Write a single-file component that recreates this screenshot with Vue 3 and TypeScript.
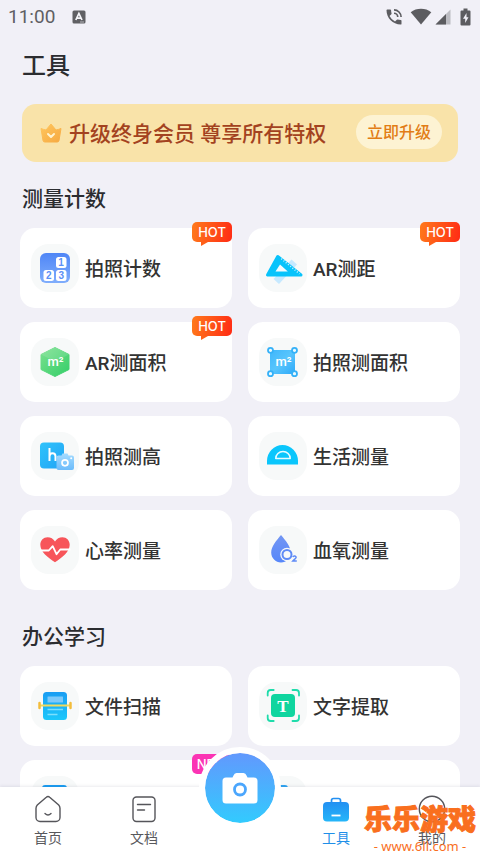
<script setup lang="ts">
interface Tool {
  id: string
  icon: string
  label?: string
  tag?: 'HOT' | 'NEW'
}

interface Section {
  title: string
  tools: Tool[]
}

const sections: Section[] = [
  {
    title: '测量计数',
    tools: [
      { id: 'count', icon: 'count', label: '拍照计数', tag: 'HOT' },
      { id: 'distance', icon: 'distance', label: 'AR测距', tag: 'HOT' },
      { id: 'ar-area', icon: 'hexagon', label: 'AR测面积', tag: 'HOT' },
      { id: 'photo-area', icon: 'area', label: '拍照测面积' },
      { id: 'height', icon: 'height', label: '拍照测高' },
      { id: 'life', icon: 'protractor', label: '生活测量' },
      { id: 'heart', icon: 'heart', label: '心率测量' },
      { id: 'oxygen', icon: 'oxygen', label: '血氧测量' },
    ],
  },
  {
    title: '办公学习',
    tools: [
      { id: 'scan', icon: 'scan', label: '文件扫描' },
      { id: 'text', icon: 'text', label: '文字提取' },
      { id: 'sheet', icon: 'sheet', tag: 'NEW' },
      { id: 'card', icon: 'card' },
    ],
  },
]
</script>

<template>
  <div class="app">
    <header class="status">
      <span class="clock">11:00</span>
      <svg class="badge-a" viewBox="0 0 14 14" width="14" height="14">
        <rect x="0.5" y="0.5" width="13" height="13" rx="1.5" fill="#606064" />
        <path d="M3.8 10 6.9 3.4 10 10M5 8.2h3.8" fill="none" stroke="#f6f6fa" stroke-width="1.7" />
        <path d="M8 12h4" stroke="#b5b5ba" stroke-width="1" />
      </svg>
      <span class="status-icons">
        <svg viewBox="0 0 24 24" width="20" height="20" fill="#5c5c60">
          <path d="M20 15.5c-1.25 0-2.45-.2-3.57-.57a1 1 0 0 0-1.02.24l-2.2 2.2a15.05 15.05 0 0 1-6.59-6.58l2.2-2.21a.96.96 0 0 0 .25-1A11.36 11.36 0 0 1 8.5 4a1 1 0 0 0-1-1H4a1 1 0 0 0-1 1c0 9.39 7.61 17 17 17a1 1 0 0 0 1-1v-3.500a1 1 0 0 0-1-1z" />
          <path d="M12 3.500a8.500 8.500 0 0 1 8.500 8.500M12 7.500a4.500 4.500 0 0 1 4.500 4.500" fill="none" stroke="#5c5c60" stroke-width="2" />
        </svg>
        <svg class="wifi" viewBox="0 0 22 17" width="22" height="17" fill="#5c5c60">
          <path d="M11 16.500.7 4.200C6.500-.4 15.500-.4 21.300 4.200z" />
        </svg>
        <svg class="signal" viewBox="0 0 16 16" width="16" height="16">
          <path d="M15.500.5v15H.5z" fill="#bcbcc2" />
          <path d="M11 5v10.500H.5z" fill="#5c5c60" />
        </svg>
        <svg class="battery" viewBox="0 0 11 18" width="11" height="18">
          <path d="M3.500.5h4v2H9.500a1 1 0 0 1 1 1v13a1 1 0 0 1-1 1h-8a1 1 0 0 1-1-1v-13a1 1 0 0 1 1-1h2z" fill="#5c5c60" />
          <path d="M6.500 5 3 10.700h2.200V15l3.300-5.700H6.500z" fill="#f1f0f7" />
        </svg>
      </span>
    </header>

    <main>
      <h1>工具</h1>

      <div class="banner">
        <svg class="crown" viewBox="0 0 24 22" width="24" height="22">
          <defs>
            <linearGradient id="crown" x1="0" y1="0" x2="1" y2="1">
              <stop offset="0" stop-color="#ffc65e" />
              <stop offset="1" stop-color="#f6a941" />
            </linearGradient>
          </defs>
          <path d="M2 6.500Q4.500 7.500 7 8L12 2l5 6q2.500-.5 5-1.500L20 18.500q-.3 1.500-1.800 1.500H5.800Q4.300 20 4 18.500z" fill="url(#crown)" stroke="url(#crown)" stroke-linejoin="round" />
          <path d="m9 12 3 3 3-3" fill="none" stroke="#fff3cf" stroke-width="2" stroke-linecap="round" stroke-linejoin="round" />
        </svg>
        <span class="banner-text">升级终身会员 尊享所有特权</span>
        <button type="button" class="upgrade">立即升级</button>
      </div>

      <section v-for="section in sections" :key="section.title">
        <h2>{{ section.title }}</h2>
        <div class="grid">
          <button v-for="tool in section.tools" :key="tool.id" type="button" class="tool">
            <svg class="tile" viewBox="0 0 48 48" width="48" height="48">
              <template v-if="tool.icon === 'count'">
                <defs>
                  <linearGradient id="count" x1="0" y1="0" x2="0" y2="1">
                    <stop offset="0" stop-color="#4f86f6" />
                    <stop offset="1" stop-color="#7fadfc" />
                  </linearGradient>
                </defs>
                <rect x="9" y="9" width="30" height="30" rx="6" fill="url(#count)" />
                <g fill="#fff">
                  <rect x="25" y="13" width="10.500" height="11" rx="2.500" />
                  <rect x="12.500" y="26" width="10.500" height="11" rx="2.500" />
                  <rect x="25" y="26" width="10.500" height="11" rx="2.500" />
                </g>
                <g class="digit" fill="#5b8ff6">
                  <text x="30" y="22">1</text>
                  <text x="17.700" y="35">2</text>
                  <text x="30.300" y="35">3</text>
                </g>
              </template>

              <template v-else-if="tool.icon === 'distance'">
                <path d="m14.500 35 18-19.500 5.500 5-18 19.500z" fill="#c6e9ff" />
                <path d="M18.700 12.500 8.500 31h33.500z" fill="#08c3fb" stroke="#08c3fb" stroke-width="3" stroke-linejoin="round" />
                <path d="m21 20.500-4.500 7h12.300z" fill="#f3fbfe" />
                <path d="M22.300 14.700 40.500 29.800" fill="none" stroke="#c9f1ff" stroke-width="1.600" stroke-dasharray="1 1.900" />
              </template>

              <template v-else-if="tool.icon === 'hexagon'">
                <defs>
                  <linearGradient id="hex" x1="0" y1="0" x2="1" y2="1">
                    <stop offset="0" stop-color="#7be08f" />
                    <stop offset="1" stop-color="#35cf69" />
                  </linearGradient>
                </defs>
                <path d="M24 9.500 38 16.500v15L24 38.500 10 31.500v-15z" fill="url(#hex)" stroke="url(#hex)" stroke-linejoin="round" />
                <path d="m10 16.500 14 7 14-7L24 9.500z" fill="#fff" opacity=".12" />
                <text class="unit" x="24.500" y="28">m²</text>
              </template>

              <template v-else-if="tool.icon === 'area'">
                <defs>
                  <linearGradient id="area" x1="0" y1="0" x2="1" y2="1">
                    <stop offset="0" stop-color="#3fb6fb" />
                    <stop offset=".5" stop-color="#57c5fd" />
                    <stop offset="1" stop-color="#2fa9f8" />
                  </linearGradient>
                </defs>
                <rect x="11" y="12" width="25" height="24" fill="url(#area)" />
                <g fill="#eafaff" stroke="#35b1f8" stroke-width="1.800">
                  <circle cx="11.500" cy="12.300" r="2.500" />
                  <circle cx="35.500" cy="12.300" r="2.500" />
                  <circle cx="11.500" cy="35.700" r="2.500" />
                  <circle cx="35.500" cy="35.700" r="2.500" />
                </g>
                <text class="unit" x="24.500" y="28">m²</text>
              </template>

              <template v-else-if="tool.icon === 'height'">
                <defs>
                  <linearGradient id="height" x1="0" y1="0" x2="1" y2="1">
                    <stop offset="0" stop-color="#2fc3fb" />
                    <stop offset="1" stop-color="#22a4f5" />
                  </linearGradient>
                  <linearGradient id="height-cam" x1="0" y1="0" x2="0" y2="1">
                    <stop offset="0" stop-color="#a5dbff" />
                    <stop offset="1" stop-color="#6cbcfb" />
                  </linearGradient>
                </defs>
                <rect x="9" y="10.500" width="24" height="26" rx="4" fill="url(#height)" />
                <path d="M18.500 16v13M18.500 24.500c0-4.500 6-4.500 6 0v4.500" fill="none" stroke="#fff" stroke-width="2" />
                <path d="M30.500 23.500l1-2h5l1 2H41a2 2 0 0 1 2 2v10.500a2 2 0 0 1-2 2H27.500a2 2 0 0 1-2-2V25.500a2 2 0 0 1 2-2z" fill="url(#height-cam)" />
                <circle cx="34" cy="30.800" r="3" fill="none" stroke="#fff" stroke-width="1.700" />
                <circle cx="40.200" cy="26.200" r="1" fill="#fff" />
              </template>

              <template v-else-if="tool.icon === 'protractor'">
                <path d="M8 32.500V29a15.500 16 0 0 1 31 0v3.500z" fill="#0ac6fc" />
                <path d="M16.800 26.500a7.200 7 0 0 1 14.400 0z" fill="none" stroke="#e8fbff" stroke-width="1.600" stroke-linejoin="round" />
              </template>

              <template v-else-if="tool.icon === 'heart'">
                <path d="M24 36.300C17 31.500 9.300 26 9.300 18.800c0-4.500 3.300-7.500 7.200-7.500 3.200 0 5.800 1.500 7.500 4.200 1.700-2.700 4.300-4.200 7.500-4.200 3.900 0 7.200 3 7.200 7.500 0 7.200-7.700 12.700-14.700 17.500z" fill="#f7555a" />
                <path d="M8.500 24.500h9.300l3.900-4.300 3.800 8 3.800-4.700H39.500" fill="none" stroke="#fff" stroke-width="1.800" stroke-linejoin="round" />
              </template>

              <template v-else-if="tool.icon === 'oxygen'">
                <defs>
                  <linearGradient id="drop" x1="0" y1="0" x2="0" y2="1">
                    <stop offset="0" stop-color="#7396f3" />
                    <stop offset="1" stop-color="#5687fa" />
                  </linearGradient>
                </defs>
                <path d="M22 9c4.500 5.500 9.800 11.500 9.800 17.500 0 5.600-4.400 10-9.800 10s-9.800-4.400-9.800-10C12.200 20.500 17.500 14.500 22 9z" fill="url(#drop)" />
                <circle cx="28" cy="28.500" r="6.800" fill="#f7f9f9" />
                <circle cx="28" cy="28.500" r="4.500" fill="none" stroke="#5f8bf6" stroke-width="2" />
                <path d="M33.800 31c.5-1.500 3.500-1.300 3.300.5-.1 1-2 2-3.300 3.500h4" fill="none" stroke="#5f8bf6" stroke-width="1.500" />
              </template>

              <template v-else-if="tool.icon === 'scan'">
                <defs>
                  <linearGradient id="scan" x1="0" y1="0" x2="0" y2="1">
                    <stop offset="0" stop-color="#1a9df3" />
                    <stop offset="1" stop-color="#1cc8fb" />
                  </linearGradient>
                </defs>
                <rect x="12" y="10" width="24" height="28" rx="3.500" fill="url(#scan)" />
                <rect x="16.500" y="14.500" width="15.500" height="6" rx=".5" fill="#7dc9fa" />
                <path d="M16.500 27.500h15.500M16.500 32.500h10" stroke="#7be0fd" stroke-width="1.500" />
                <path d="M9 23.500h30" stroke="#f2d95c" stroke-width="2" />
                <path d="M8.500 21v5M39.500 21v5" stroke="#f3bd3c" stroke-width="2.500" stroke-linecap="round" />
              </template>

              <template v-else-if="tool.icon === 'text'">
                <rect x="12" y="12" width="24" height="23" rx="4" fill="#0fd59f" />
                <path d="M8.700 13.500V11a3 3 0 0 1 3-3h3M33.500 8h3.500a3 3 0 0 1 3 3v2.500M40 33.500V36a3 3 0 0 1-3 3h-3.500M14.700 39h-3a3 3 0 0 1-3-3v-2.500" fill="none" stroke="#1fdcab" stroke-width="1.800" stroke-linecap="round" />
                <text class="serif" x="24" y="29.500">T</text>
              </template>

              <rect v-else-if="tool.icon === 'sheet'" x="11" y="9" width="25" height="30" rx="3" fill="#1a9df3" />
              <rect v-else x="12" y="9" width="17" height="30" rx="3" fill="#2fa5f3" />
            </svg>
            <span v-if="tool.label" class="label">{{ tool.label }}</span>
            <span v-if="tool.tag" class="tag" :class="tool.tag.toLowerCase()">{{ tool.tag }}</span>
          </button>
        </div>
      </section>
    </main>

    <nav class="tabs">
      <a href="#home" class="tab">
        <svg viewBox="0 0 28 28" width="28" height="28" class="line">
          <path d="M12.300 2.300a2.500 2.500 0 0 1 3.400 0l9 7.700a5 5 0 0 1 1.300 3.200V22.500a4 4 0 0 1-4 4H6a4 4 0 0 1-4-4V13.200A5 5 0 0 1 3.300 10z" />
          <path d="M11 18.500q3 3 6 0" stroke-linecap="round" />
        </svg>
        <span>首页</span>
      </a>
      <a href="#docs" class="tab">
        <svg viewBox="0 0 28 28" width="28" height="28" class="line">
          <rect x="3" y="2" width="22" height="24.500" rx="3.500" />
          <path d="M7.500 9.500h13M7.500 15h7" stroke-linecap="round" />
        </svg>
        <span>文档</span>
      </a>
      <div class="tab">
        <button type="button" class="camera" aria-label="拍照">
          <svg viewBox="0 0 36 34" width="36" height="34">
            <path d="M11.500 4.500Q12.300 2 14.500 2h7q2.200 0 3 2.500L25.500 6.500H32a3.500 3.500 0 0 1 3.500 3.500v19a3.500 3.500 0 0 1-3.500 3.500H4A3.500 3.500 0 0 1 .5 29V10A3.500 3.500 0 0 1 4 6.500h6.500z" fill="#fff" />
            <circle cx="18" cy="18.500" r="5.500" fill="none" stroke="#4ba6fd" stroke-width="2.800" />
          </svg>
        </button>
      </div>
      <a href="#tools" class="tab active" aria-current="page">
        <svg viewBox="0 0 28 28" width="28" height="28">
          <defs>
            <linearGradient id="case" x1="0" y1="0" x2="0" y2="1">
              <stop offset="0" stop-color="#2390f2" />
              <stop offset="1" stop-color="#25b6f9" />
            </linearGradient>
          </defs>
          <path d="M9.500 8V5.500a2 2 0 0 1 2-2h5a2 2 0 0 1 2 2V8" fill="none" stroke="#2390f2" stroke-width="1.700" />
          <rect x="1" y="7" width="26" height="19.500" rx="4" fill="url(#case)" />
          <path d="M9.500 20.500h9" stroke="#fff" stroke-width="1.800" />
        </svg>
        <span>工具</span>
      </a>
      <a href="#me" class="tab">
        <svg viewBox="0 0 28 28" width="28" height="28" class="line">
          <circle cx="14" cy="14" r="12.700" />
        </svg>
        <span>我的</span>
      </a>
      <div class="stamp">
        <span class="stamp-name">乐乐游戏</span>
        <span class="stamp-site">- www.6ll.com -</span>
      </div>
    </nav>
  </div>
</template>

<style>
body {
  background: #f1f0f7;
}
</style>

<style scoped>
.app {
  height: 100vh;
  display: flex;
  flex-direction: column;
  overflow: hidden;
  background: #f1f0f7;
  color: #2b2c30;
  font-family: Roboto, "Noto Sans CJK SC", sans-serif;
}

button {
  border: 0;
  padding: 0;
  font: inherit;
  color: inherit;
}

.status {
  flex: none;
  display: flex;
  align-items: center;
  height: 33px;
  padding: 0 9px 0 8px;
}

.clock {
  font-size: 19px;
  line-height: 33px;
  color: #5f5f63;
}

.badge-a {
  margin-left: 17px;
}

.status-icons {
  display: flex;
  align-items: center;
  margin-left: auto;
}

.wifi {
  margin-left: 6px;
}

.signal {
  margin-left: 3px;
}

.battery {
  margin-left: 9px;
}

main {
  flex: 1;
  min-height: 0;
  overflow: hidden;
  padding: 0 20px;
}

h1,
h2 {
  margin: 0 2px;
  font-weight: 500;
}

h1 {
  font-size: 24px;
  line-height: 66px;
}

h2 {
  padding: 21px 0 12px;
  font-size: 21px;
  line-height: 33px;
}

section + section h2 {
  padding-top: 31px;
}

.banner {
  display: flex;
  align-items: center;
  margin: 5px 2px 0;
  height: 58px;
  padding: 0 16px 0 17px;
  border-radius: 14px;
  background: #f9e3a9;
}

.crown {
  flex: none;
}

.banner-text {
  margin-left: 6px;
  padding-bottom: 2px;
  font-size: 21px;
  font-weight: 500;
  color: #a34220;
  white-space: nowrap;
}

.upgrade {
  margin-left: auto;
  height: 34px;
  margin-bottom: 2px;
  padding: 0 11px 2px;
  border-radius: 17px;
  background: #fdf3d3;
  font-size: 16px;
  font-weight: 500;
  color: #e27d16;
  white-space: nowrap;
}

.grid {
  display: grid;
  grid-template-columns: repeat(2, 1fr);
  gap: 14px 16px;
}

.tool {
  position: relative;
  display: flex;
  align-items: center;
  gap: 6px;
  height: 80px;
  padding: 0 11px;
  border-radius: 15px;
  background: #fff;
  text-align: left;
}

.tile {
  flex: none;
  border-radius: 18px;
  background: #f7f9f9;
}

.label {
  padding-bottom: 1px;
  font-size: 19px;
  font-weight: 500;
  color: #333;
  white-space: nowrap;
}

.digit {
  font: 700 10px "Liberation Sans", sans-serif;
  text-anchor: middle;
}

.unit {
  font: 500 13px Roboto, sans-serif;
  text-anchor: middle;
  fill: #fff;
}

.serif {
  font: 700 17px "Liberation Serif", serif;
  text-anchor: middle;
  fill: #fff;
}

.tag {
  position: absolute;
  top: -6px;
  right: 0;
  width: 40px;
  border-radius: 5px;
  font-family: Inter, sans-serif;
  font-size: 13px;
  font-weight: 500;
  line-height: 20px;
  text-align: center;
  color: #fff;
}

.hot {
  background: linear-gradient(100deg, #ff7a1c, #ff2b14);
}

.new {
  background: #fb34b4;
}

.tag::after {
  content: "";
  position: absolute;
  left: 9px;
  top: 100%;
  border-top: 4px solid #ff6019;
  border-right: 7px solid transparent;
}

.new::after {
  display: none;
}

.tabs {
  position: relative;
  flex: none;
  display: grid;
  grid-template-columns: repeat(5, 1fr);
  height: 67px;
  background: #fff;
  box-shadow: 0 -1px 3px rgba(60, 60, 90, 0.1);
}

.tab {
  display: flex;
  flex-direction: column;
  align-items: center;
  padding-top: 8px;
  gap: 5px;
  font-size: 14px;
  line-height: 20px;
  color: #58585c;
  text-decoration: none;
}

.active {
  color: #1f8fe8;
}

.line {
  fill: none;
  stroke: #55555a;
  stroke-width: 1.4;
}

.camera {
  position: absolute;
  top: -40px;
  left: 50%;
  display: flex;
  align-items: center;
  justify-content: center;
  box-sizing: content-box;
  width: 70px;
  height: 70px;
  margin-left: -41px;
  border: 6px solid #fff;
  border-radius: 50%;
  background: linear-gradient(#6694fd, #2ecffe) border-box;
  background-clip: padding-box;
}

.stamp {
  position: absolute;
  right: 4px;
  bottom: 0;
  display: flex;
  flex-direction: column;
  align-items: center;
  color: #f96f1e;
  white-space: nowrap;
}

.stamp-name {
  font-size: 28px;
  font-weight: 900;
  line-height: 34px;
  -webkit-text-stroke: 1px #f96f1e;
}

.stamp-site {
  font-family: "Noto Sans", sans-serif;
  font-size: 13px;
  line-height: 16px;
}
</style>
